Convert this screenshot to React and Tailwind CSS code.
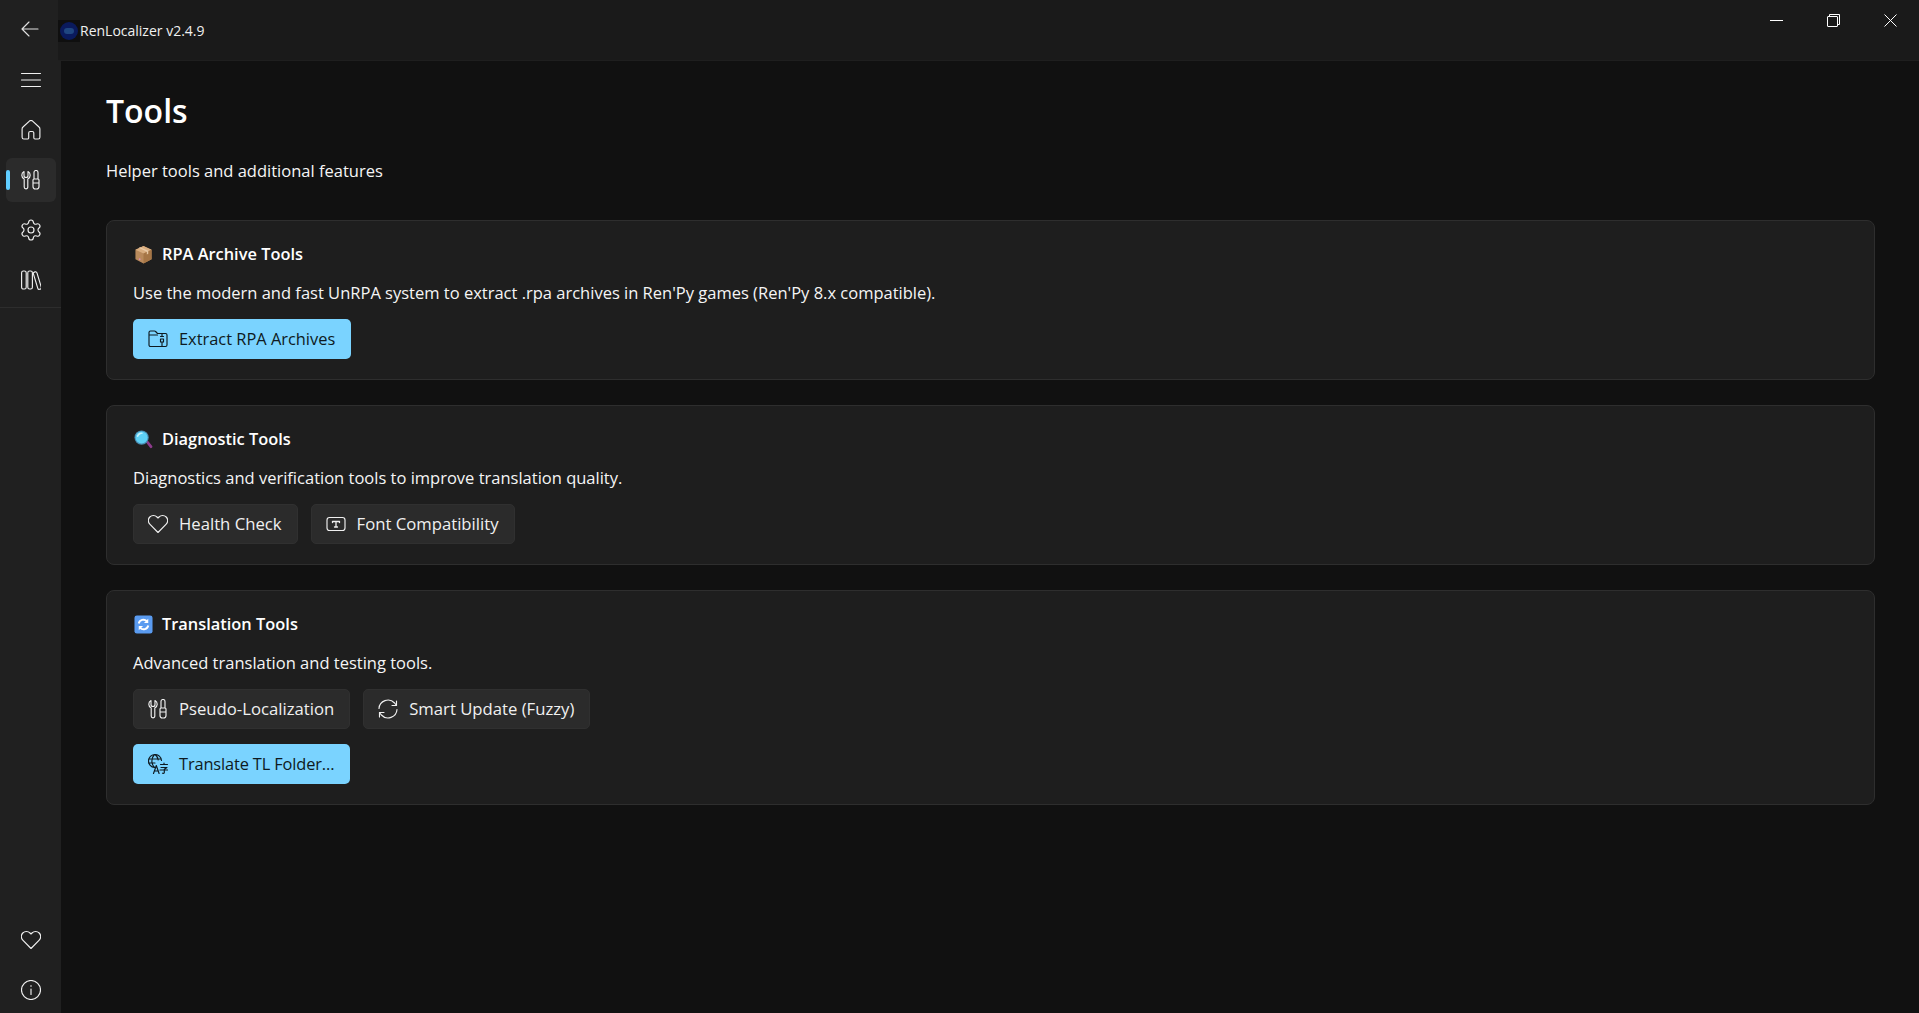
import React from 'react';
import { Settings } from 'lucide-react';

// --- Stroke icons drawn on a 20 unit grid ---
const Icon = ({ children, className = 'w-5 h-5', strokeWidth = 1.15 }) => (
  <svg viewBox="0 0 20 20" fill="none" stroke="currentColor" strokeWidth={strokeWidth} strokeLinecap="round" strokeLinejoin="round" className={`shrink-0 ${className}`}>
    {children}
  </svg>
);

const BackIcon = (p) => <Icon {...p}><path d="M18 10H2.5M9 3l-7 7 7 7" /></Icon>;
const MenuIcon = (p) => <Icon {...p}><path d="M.5 3.500h19M.5 10h19M.5 16.500h19" /></Icon>;
const HomeIcon = (p) => (
  <Icon {...p}>
    <path d="M8.400 1.100a2.400 2.400 0 0 1 3.200 0l6.400 5.900c.6.500.9 1.100.9 1.900v8.300a1.800 1.800 0 0 1-1.800 1.800h-3.100a1.200 1.200 0 0 1-1.200-1.200V13a1.500 1.500 0 0 0-1.500-1.500H9.200A1.500 1.500 0 0 0 7.700 13v4.800a1.200 1.200 0 0 1-1.200 1.200H2.900a1.800 1.800 0 0 1-1.800-1.800V8.900c0-.8.300-1.400.9-1.900z" />
  </Icon>
);
const ToolsIcon = (p) => (
  <Icon {...p}>
    <path d="M3 1.500C1.500 2.200.8 3.800.8 5.300c0 1.600 1 3 2.400 3.700V17a1.800 1.800 0 0 0 3.600 0V9c1.400-.7 2.400-2.100 2.400-3.700 0-1.500-.7-3.100-2.200-3.800v4a2 2 0 0 1-4 0z" />
    <path d="M13 9V2.500a2 2 0 0 1 4 0V9M13 9h4a1 1 0 0 1 1 1v6.500a2.500 2.500 0 0 1-2.500 2.500h-1A2.500 2.500 0 0 1 12 16.500V10a1 1 0 0 1 1-1zM12 13h6" />
  </Icon>
);
const LibraryIcon = (p) => (
  <Icon {...p}>
    <rect x=".6" y="1" width="4.600" height="18" rx="1.800" />
    <rect x="6.800" y="1" width="4.600" height="18" rx="1.800" />
    <rect x="14.500" y="1.600" width="3.700" height="18" rx="1.500" transform="rotate(-17 16.300 10.500)" />
  </Icon>
);
const HeartIcon = (p) => (
  <Icon {...p}>
    <path d="M10 18.500L1.800 10.200a5.100 5.100 0 0 1 0-7.200 5.100 5.100 0 0 1 7.200 0l1 1 1-1a5.100 5.100 0 0 1 7.200 0 5.100 5.100 0 0 1 0 7.200z" />
  </Icon>
);
const InfoIcon = (p) => (
  <Icon {...p}>
    <circle cx="10" cy="10" r="9.500" />
    <path d="M10 9v5.500" />
    <circle cx="10" cy="6" r=".8" fill="currentColor" stroke="none" />
  </Icon>
);
const FolderZipIcon = (p) => (
  <Icon {...p}>
    <path d="M1 6V3.500A1.500 1.500 0 0 1 2.500 2h4c.4 0 .8.200 1.100.500L9.500 4.500H17.500A1.500 1.500 0 0 1 19 6v10a1.500 1.500 0 0 1-1.500 1.500h-15A1.500 1.500 0 0 1 1 16V6h8.500" />
    <path d="M14 4.500v3h-1.500M14 7.500h1.500M14 10h-1.500M14 10h1.500V13h-3v-3M14 13v4.500" />
  </Icon>
);
const TextBoxIcon = (p) => (
  <Icon {...p}>
    <rect x="1" y="3.500" width="18" height="13" rx="2.500" />
    <path d="M6.500 7.500h7M10 7.500v5.500M8.500 13h3M6.500 7.500v1M13.500 7.500v1" strokeWidth="1.300" />
  </Icon>
);
const SyncIcon = (p) => (
  <Icon {...p}>
    <path d="M1 9.500A9 9 0 0 1 16.600 4L18.500 6.500M18.500 2v4.500H14" />
    <path d="M19 10.500A9 9 0 0 1 3.400 16L1.500 13.500M1.500 18v-4.500H6" />
  </Icon>
);
const TranslateIcon = (p) => (
  <Icon {...p}>
    <path d="M6.500 13.500A6.500 6.500 0 1 1 13.500 6.500M.5 5h12.500M.5 9h6.500M6.500 .5c-3.500 3.500-3.500 9.500 0 13M7 .5c2 1.500 3 3.500 3.200 5.500" />
    <path d="M5.500 19.500l2.800-8 2.800 8M6.500 17h3.600M12.500 10.500h7M16 9v1.500M13 13.500h6l-2.700 1.800v3.200c0 .7-.6 1-1.800.7M12 16h8" />
  </Icon>
);

// Emoji look-alikes for the section headers
const PackageEmoji = () => (
  <svg viewBox="0 0 20 20" className="w-[19px] h-[19px] shrink-0">
    <path d="M10 1l8.500 4v10L10 19.500 1.500 15V5z" fill="#b98a5c" />
    <path d="M10 1l8.500 4L10 9 1.500 5z" fill="#d9ae80" />
    <path d="M10 9l8.500-4v10L10 19.500z" fill="#a67646" />
    <path d="M5 3l8.500 4v3l1.500-.7V6L6.500 2.300z" fill="#e8c9a5" />
    <circle cx="6" cy="15" r="1" fill="#d98fb0" />
  </svg>
);
const SearchEmoji = () => (
  <svg viewBox="0 0 20 20" className="w-[19px] h-[19px] shrink-0">
    <path d="M12.500 13l2-2 4.500 5.500a1.500 1.500 0 0 1-2.300 2z" fill="#8e3b8c" />
    <circle cx="8" cy="8" r="7.500" fill="#4a8fb5" />
    <circle cx="8" cy="8" r="6.300" fill="#5dd0f5" />
    <path d="M3 6a5.500 5.500 0 0 1 5-3.500c1.500 0 2 1 .5 1.500C6 4.500 5 6 4.500 7 4 8 3 7 3 6z" fill="#c5f1fd" />
  </svg>
);
const SyncEmoji = () => (
  <svg viewBox="0 0 20 20" className="w-[19px] h-[19px] shrink-0">
    <rect x=".5" y=".5" width="19" height="19" rx="2.500" fill="#5a9bf0" />
    <path d="M5 9a5 5 0 0 1 8.500-2.500M15 11a5 5 0 0 1-8.500 2.500" fill="none" stroke="#fff" strokeWidth="2" />
    <path d="M15 4v4.500h-4.500zM5 16v-4.500h4.500z" fill="#fff" />
  </svg>
);

const AppLogo = () => (
  <div className="w-[22px] h-[22px] bg-[#0f0f0f] flex items-center justify-center shrink-0">
    <div className="w-[18px] h-[18px] rounded-full bg-[#0a1a5c] flex items-center justify-center">
      <div className="w-[10px] h-[6px] rounded-full bg-[#1f4680]"></div>
    </div>
  </div>
);

const ToolButton = ({ icon: ButtonIcon, label, primary, className = '' }) => (
  <button
    className={`h-10 rounded-[5px] flex items-center gap-[11px] leading-none whitespace-nowrap ${
      primary
        ? 'pl-[15px] pr-[16px] text-[16.4px] bg-[#7ad3ff] text-[#0e1a21]'
        : 'pl-[14px] pr-[15px] text-[16.7px] bg-[#2b2b2b] text-[#f0f0f0] border border-[#303030]'
    } ${className}`}
  >
    <ButtonIcon />
    {label}
  </button>
);

const ToolCard = ({ emoji, title, description, children }) => (
  <section className="bg-[#1e1e1e] border border-[#2e2e2e] rounded-[8px] pt-[22px] pr-[26px] pb-[20px] pl-[26px]">
    <div className="flex items-center gap-[9px] ml-[1px] h-[22px]">
      {emoji}
      <h2 className="text-[16.4px] font-semibold text-white leading-none">{title}</h2>
    </div>
    <p className="text-[16.5px] text-[#f5f5f5] leading-[22px] mt-[17px] mb-[15px]">{description}</p>
    {children}
  </section>
);

const NavItem = ({ icon: NavIcon, active }) => (
  <div className={`relative h-[44px] ml-[6px] mr-[5px] rounded-[6px] flex items-center justify-center text-[#f0f0f0] ${active ? 'bg-[#2b2b2b]' : ''}`}>
    {active && <span className="absolute left-0 top-[12px] w-[4px] h-[20px] rounded-full bg-[#60cdff]"></span>}
    <NavIcon />
  </div>
);

const App = () => {
  return (
    <div className="flex h-screen overflow-hidden bg-[#111111] text-white font-['Open_Sans','Noto_Sans',sans-serif]">
      {/* Sidebar */}
      <aside className="w-[61px] shrink-0 bg-[#202020] flex flex-col">
        <div className="h-[58px] flex items-center justify-center text-[#e0e0e0] pr-[1px]">
          <BackIcon />
        </div>
        <div className="flex flex-col gap-[6px] pb-[5px] border-b border-[#2d2d2d]">
          <NavItem icon={MenuIcon} />
          <NavItem icon={HomeIcon} />
          <NavItem icon={ToolsIcon} active />
          <NavItem icon={() => <Settings size={24} strokeWidth={1.150} />} />
          <NavItem icon={LibraryIcon} />
        </div>
        <div className="mt-auto flex flex-col gap-[6px] pb-[1px]">
          <NavItem icon={HeartIcon} />
          <NavItem icon={InfoIcon} />
        </div>
      </aside>

      <div className="flex-1 min-w-0 flex flex-col">
        {/* Title bar */}
        <header className="h-[61px] -ml-[3px] relative bg-[#1a1a1a] border-b border-[#1f1f1f] flex items-start shrink-0">
          <div className="flex items-center mt-[20px]">
            <AppLogo />
            <span className="text-[14px] leading-[20px] text-[#f0f0f0]">RenLocalizer v2.4.9</span>
          </div>
          <div className="ml-auto flex items-start text-white">
            <div className="w-[57px] h-[40px] flex items-center justify-center">
              <div className="w-[13px] h-px bg-white"></div>
            </div>
            <div className="w-[57px] h-[40px] flex items-center justify-center">
              <svg viewBox="0 0 13 13" className="w-[13px] h-[13px]" fill="none" stroke="currentColor">
                <rect x=".5" y="2.500" width="10" height="10" rx=".5" />
                <path d="M2.500 2.500V.500h10v10h-2" />
              </svg>
            </div>
            <div className="w-[57px] h-[40px] flex items-center justify-center">
              <svg viewBox="0 0 13 13" className="w-[13px] h-[13px]" fill="none" stroke="currentColor">
                <path d="M.5.500l12 12M12.500.500l-12 12" />
              </svg>
            </div>
          </div>
        </header>

        {/* Main content */}
        <main className="flex-1 pt-[28px] pl-[45px] pr-[44px]">
          <h1 className="text-[32px] leading-[44px] font-semibold text-white">Tools</h1>
          <p className="text-[16.5px] leading-[22px] mt-[27px] text-[#f5f5f5]">Helper tools and additional features</p>

          <div className="flex flex-col gap-[25px] mt-[38px]">
            <ToolCard
              emoji={<PackageEmoji />}
              title="RPA Archive Tools"
              description="Use the modern and fast UnRPA system to extract .rpa archives in Ren'Py games (Ren'Py 8.x compatible)."
            >
              <div className="flex gap-[13px]">
                <ToolButton icon={FolderZipIcon} label="Extract RPA Archives" primary />
              </div>
            </ToolCard>

            <ToolCard
              emoji={<SearchEmoji />}
              title="Diagnostic Tools"
              description="Diagnostics and verification tools to improve translation quality."
            >
              <div className="flex gap-[13px]">
                <ToolButton icon={HeartIcon} label="Health Check" />
                <ToolButton icon={TextBoxIcon} label="Font Compatibility" />
              </div>
            </ToolCard>

            <ToolCard
              emoji={<SyncEmoji />}
              title="Translation Tools"
              description="Advanced translation and testing tools."
            >
              <div className="flex flex-col items-start gap-[15px]">
                <div className="flex gap-[13px]">
                  <ToolButton icon={ToolsIcon} label="Pseudo-Localization" />
                  <ToolButton icon={SyncIcon} label="Smart Update (Fuzzy)" />
                </div>
                <ToolButton icon={TranslateIcon} label="Translate TL Folder..." primary className="tracking-[-0.14px]" />
              </div>
            </ToolCard>
          </div>
        </main>
      </div>
    </div>
  );
};

export default App;
